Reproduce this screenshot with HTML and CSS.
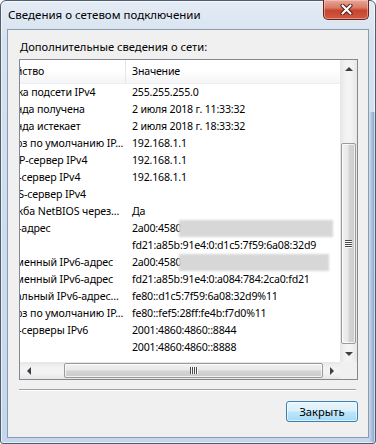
FILE: index.html
```html
<!DOCTYPE html>
<html lang="ru">
<head>
    <meta charset="UTF-8">
    <title>Сведения о сетевом подключении</title>
    <link rel="stylesheet" href="styles.css">
</head>
<body>
    <div class="window">
        <!-- Title bar -->
        <div class="titlebar">
            <span class="title">Сведения о сетевом подключении</span>
            <button class="close-btn" aria-label="Закрыть">
                <svg width="13" height="11" viewBox="0 0 13 11">
                    <path d="M2.5 1.5 L10.5 9.5 M10.5 1.5 L2.5 9.5" stroke="#4a1810" stroke-width="4" stroke-linecap="round"/>
                    <path d="M2.5 1.5 L10.5 9.5 M10.5 1.5 L2.5 9.5" stroke="#fff" stroke-width="2.2" stroke-linecap="round"/>
                </svg>
            </button>
        </div>

        <!-- Client area -->
        <div class="client">
            <div class="caption">Дополнительные сведения о сети:</div>

            <div class="listview">
                <div class="lv-view">
                    <div class="lv-content">
                        <div class="lv-header">
                            <div class="lv-name">Свойство</div>
                            <div class="lv-value">Значение</div>
                        </div>
                        <div class="lv-row"><div class="lv-name">Маска подсети IPv4</div><div class="lv-value">255.255.255.0</div></div>
                        <div class="lv-row"><div class="lv-name">Аренда получена</div><div class="lv-value">2 июля 2018 г. 11:33:32</div></div>
                        <div class="lv-row"><div class="lv-name">Аренда истекает</div><div class="lv-value">2 июля 2018 г. 18:33:32</div></div>
                        <div class="lv-row"><div class="lv-name">Шлюз по умолчанию IP...</div><div class="lv-value">192.168.1.1</div></div>
                        <div class="lv-row"><div class="lv-name">DHCP-сервер IPv4</div><div class="lv-value">192.168.1.1</div></div>
                        <div class="lv-row"><div class="lv-name">DNS-сервер IPv4</div><div class="lv-value">192.168.1.1</div></div>
                        <div class="lv-row"><div class="lv-name">WINS-сервер IPv4</div><div class="lv-value"></div></div>
                        <div class="lv-row"><div class="lv-name">Служба NetBIOS через...</div><div class="lv-value">Да</div></div>
                        <div class="lv-row"><div class="lv-name">IPv6-адрес</div><div class="lv-value">2a00:4580<span class="redacted"></span></div></div>
                        <div class="lv-row"><div class="lv-name"></div><div class="lv-value">fd21:a85b:91e4:0:d1c5:7f59:6a08:32d9</div></div>
                        <div class="lv-row"><div class="lv-name">Временный IPv6-адрес</div><div class="lv-value">2a00:4580<span class="redacted short"></span></div></div>
                        <div class="lv-row"><div class="lv-name">Временный IPv6-адрес</div><div class="lv-value">fd21:a85b:91e4:0:a084:784:2ca0:fd21</div></div>
                        <div class="lv-row"><div class="lv-name">Локальный IPv6-адрес...</div><div class="lv-value">fe80::d1c5:7f59:6a08:32d9%11</div></div>
                        <div class="lv-row"><div class="lv-name">Шлюз по умолчанию IP...</div><div class="lv-value">fe80::fef5:28ff:fe4b:f7d0%11</div></div>
                        <div class="lv-row"><div class="lv-name">DNS-серверы IPv6</div><div class="lv-value">2001:4860:4860::8844</div></div>
                        <div class="lv-row"><div class="lv-name"></div><div class="lv-value">2001:4860:4860::8888</div></div>
                    </div>
                </div>

                <!-- Vertical scrollbar -->
                <div class="vscroll">
                    <div class="sb-btn"><span class="arrow arrow-up"></span></div>
                    <div class="sb-track">
                        <div class="sb-thumb"><span class="grip"></span></div>
                    </div>
                    <div class="sb-btn"><span class="arrow arrow-down"></span></div>
                </div>

                <!-- Horizontal scrollbar -->
                <div class="hscroll">
                    <div class="sb-btn"><span class="arrow arrow-left"></span></div>
                    <div class="sb-track">
                        <div class="sb-thumb"><span class="grip"></span></div>
                    </div>
                    <div class="sb-btn"><span class="arrow arrow-right"></span></div>
                </div>

                <div class="sb-corner"></div>
            </div>

            <div class="separator"></div>

            <div class="actions">
                <button class="btn">Закрыть</button>
            </div>
        </div>
    </div>
</body>
</html>
```

FILE: styles.css
```css
/* Reset */
* {
    margin: 0;
    padding: 0;
    box-sizing: border-box;
}

body {
    width: 376px;
    height: 444px;
    overflow: hidden;
    background: #fff;
    font-family: "Noto Sans", "Open Sans", sans-serif;
    font-size: 11px;
    color: #000;
}

/* Window frame */
.window {
    width: 376px;
    height: 444px;
    display: flex;
    flex-direction: column;
    padding: 0 6px 5px 6px;
    border: 1px solid #4f5d6f;
    border-radius: 6px 6px 3px 3px;
    background:
        linear-gradient(to left, #7f9dc4 0, #a9bfdb 3px, rgba(195, 215, 236, 0) 6px) right bottom / 7px 75% no-repeat,
        linear-gradient(to bottom, #e4ecf5 0, #d6e2ef 40px, #c3d7ec 100%);
    box-shadow: inset 0 0 0 1px rgba(255, 255, 255, 0.6);
}

/* Title bar */
.titlebar {
    height: 28px;
    display: flex;
    justify-content: space-between;
    align-items: flex-start;
}

.title {
    padding-left: 1px;
    line-height: 28px;
    font-size: 11.5px;
}

.close-btn {
    width: 46px;
    height: 20px;
    margin-top: -1px;
    border: 1px solid #6b231a;
    border-top: none;
    border-radius: 0 0 5px 5px;
    background: linear-gradient(to bottom, #e8a898 0, #d97b68 40%, #c6452f 55%, #cf5a43 100%);
    box-shadow: inset 0 0 0 1px rgba(255, 220, 210, 0.45);
    display: flex;
    align-items: center;
    justify-content: center;
}

/* Client area */
.client {
    flex: 1;
    display: flex;
    flex-direction: column;
    background: #f0f0f0;
    border: 1px solid #8b9bb0;
}

.caption {
    padding: 9px 0 0 12px;
    line-height: 16px;
    font-size: 11.2px;
}

/* List view */
.listview {
    margin: 4px 0 0 11px;
    width: 339px;
    height: 321px;
    border: 1px solid #828790;
    background: #fff;
    display: grid;
    grid-template-columns: 1fr 17px;
    grid-template-rows: 1fr 17px;
    font-size: 10.6px;
}

.lv-view {
    overflow: hidden;
}

.lv-content {
    margin-left: -33px;
    width: 353px;
}

.lv-header {
    display: flex;
    height: 24px;
    line-height: 23px;
    background: linear-gradient(to bottom, #fff 0, #fff 45%, #f4f5f7 100%);
    border-bottom: 1px solid #eceef1;
}

.lv-header .lv-name {
    border-right: 1px solid #e3e5e8;
}

.lv-row {
    display: flex;
    height: 17px;
    line-height: 17px;
}

.lv-name {
    width: 139px;
    flex-shrink: 0;
    padding-left: 10px;
    white-space: nowrap;
    overflow: hidden;
    letter-spacing: -0.1px;
}

.lv-value {
    flex: 1;
    padding-left: 6px;
    white-space: nowrap;
    letter-spacing: -0.2px;
}

.redacted {
    display: inline-block;
    vertical-align: top;
    width: 154px;
    height: 17px;
    margin-left: -2px;
    background: #d7d7d7;
    filter: blur(1.2px);
}

.redacted.short {
    width: 150px;
}

/* Scrollbars */
.vscroll {
    display: flex;
    flex-direction: column;
    background: linear-gradient(to right, #e6e6e6 0, #f3f3f3 35%, #f3f3f3 65%, #e6e6e6 100%);
}

.hscroll {
    display: flex;
    background: linear-gradient(to bottom, #e6e6e6 0, #f3f3f3 35%, #f3f3f3 65%, #e6e6e6 100%);
}

.sb-btn {
    width: 17px;
    height: 17px;
    flex-shrink: 0;
    display: flex;
    align-items: center;
    justify-content: center;
}

.vscroll .sb-track {
    flex: 1;
    display: flex;
    flex-direction: column;
    justify-content: flex-end;
    padding-bottom: 1px;
}

.hscroll .sb-track {
    flex: 1;
    display: flex;
    justify-content: flex-end;
}

.sb-thumb {
    border: 1px solid #9a9a9a;
    border-radius: 2px;
    display: flex;
    align-items: center;
    justify-content: center;
    box-shadow: inset 0 0 0 1px rgba(255, 255, 255, 0.7);
}

.vscroll .sb-thumb {
    height: 201px;
    margin: 0 1px;
    background: linear-gradient(to right, #f2f2f2 0, #e8e8e8 45%, #d4d4d4 55%, #cbcbcb 100%);
}

.hscroll .sb-thumb {
    width: 259px;
    margin: 1px 0;
    background: linear-gradient(to bottom, #f2f2f2 0, #e8e8e8 45%, #d4d4d4 55%, #cbcbcb 100%);
}

.vscroll .grip {
    width: 7px;
    height: 8px;
    background: repeating-linear-gradient(to bottom, #4b4b4b 0, #4b4b4b 1px, #fafafa 1px, #fafafa 2px);
}

.hscroll .grip {
    width: 8px;
    height: 7px;
    background: repeating-linear-gradient(to right, #4b4b4b 0, #4b4b4b 1px, #fafafa 1px, #fafafa 2px);
}

.sb-corner {
    background: #f0f0f0;
}

.arrow {
    width: 0;
    height: 0;
}

.arrow-up {
    border-left: 4px solid transparent;
    border-right: 4px solid transparent;
    border-bottom: 4px solid #3f3f3f;
}

.arrow-down {
    border-left: 4px solid transparent;
    border-right: 4px solid transparent;
    border-top: 4px solid #3f3f3f;
}

.arrow-left {
    border-top: 4px solid transparent;
    border-bottom: 4px solid transparent;
    border-right: 4px solid #3f3f3f;
}

.arrow-right {
    border-top: 4px solid transparent;
    border-bottom: 4px solid transparent;
    border-left: 4px solid #3f3f3f;
}

/* Separator and buttons */
.separator {
    margin: 9px 0 0 11px;
    width: 337px;
    height: 2px;
    border-top: 1px solid #a0a0a0;
    border-bottom: 1px solid #fff;
}

.actions {
    display: flex;
    justify-content: flex-end;
    padding: 10px 10px 0 0;
}

.btn {
    width: 72px;
    height: 21px;
    border: 1px solid #3c7fb1;
    border-radius: 3px;
    background: linear-gradient(to bottom, #eaf6fd 0, #d9f0fc 48%, #bee6fd 52%, #a7d9f5 100%);
    box-shadow: inset 0 0 0 1px rgba(255, 255, 255, 0.6);
    font-family: inherit;
    font-size: 11.2px;
    color: #000;
}
```
